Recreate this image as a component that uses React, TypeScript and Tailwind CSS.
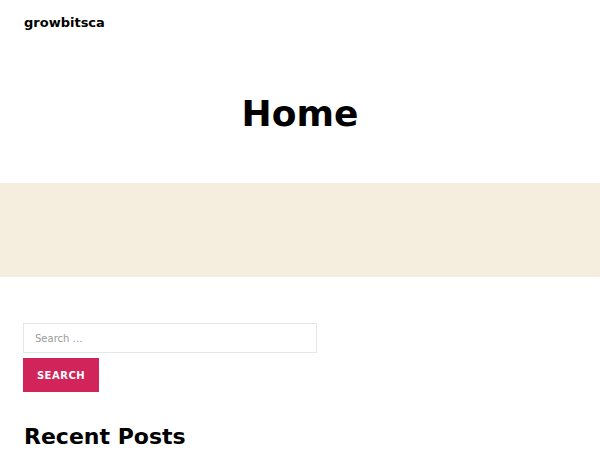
export default function App() {
  return (
    <div className="min-h-[450px] bg-white text-black" style={{ fontFamily: '"DejaVu Sans", sans-serif' }}>
      {/* Site header */}
      <header className="px-6 pt-[14px] h-[60px]">
        <p className="text-[13px] font-bold leading-[18px]">growbitsca</p>
      </header>

      {/* Page title */}
      <div className="h-[123px] flex justify-center pt-[30px]">
        <h1 className="text-[36px] font-bold leading-[48px]">Home</h1>
      </div>

      {/* Featured band */}
      <div className="h-[94px] bg-[#f5eede]" />

      {/* Sidebar widgets */}
      <aside className="px-6 pt-[46px]">
        <form className="w-[294px] -ml-px" onSubmit={e => e.preventDefault()}>
          <input
            type="search"
            placeholder="Search …"
            className="block w-full h-[30px] border border-[#e6e6e6] px-[11px] text-[10px] placeholder:text-[#9a9a9a] outline-none"
          />
          <button
            type="submit"
            className="mt-[5px] h-[34px] w-[76px] bg-[#d0245a] text-white text-[10px] font-bold uppercase tracking-[0.5px]"
          >
            Search
          </button>
        </form>
        <h2 className="mt-[30px] text-[22px] font-bold leading-[30px]">Recent Posts</h2>
      </aside>
    </div>
  )
}
